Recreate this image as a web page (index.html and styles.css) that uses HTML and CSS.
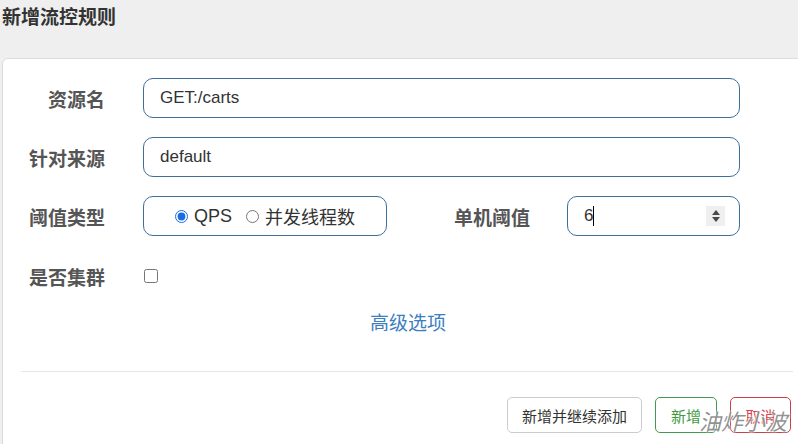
FILE: index.html
```html
<!DOCTYPE html>
<html lang="zh-CN">

<head>
    <meta charset="UTF-8">
    <meta name="viewport" content="width=device-width, initial-scale=1.0">
    <title>新增流控规则</title>
    <link rel="stylesheet" href="styles.css">
</head>

<body>
    <h3 class="title">新增流控规则</h3>
    <div class="card">
        <!-- 表单 -->
        <div class="form">
            <div class="row">
                <label class="label">资源名</label>
                <input class="field" type="text" value="GET:/carts" />
            </div>
            <div class="row">
                <label class="label">针对来源</label>
                <input class="field" type="text" value="default" />
            </div>
            <div class="row">
                <label class="label">阈值类型</label>
                <div class="radios">
                    <label class="radio"><input type="radio" name="grade" checked /> QPS</label>
                    <label class="radio"><input type="radio" name="grade" /> 并发线程数</label>
                </div>
                <label class="label label-2">单机阈值</label>
                <div class="num">
                    <span>6</span><span class="caret"></span>
                    <span class="spin">
                        <i class="up"></i>
                        <i class="down"></i>
                    </span>
                </div>
            </div>
            <div class="row row-check">
                <label class="label">是否集群</label>
                <input class="check" type="checkbox" />
            </div>
            <a class="more" href="#">高级选项</a>
        </div>
        <div class="line"></div>
        <div class="footer">
            <button class="btn">新增并继续添加</button>
            <button class="btn btn-ok">新增</button>
            <button class="btn btn-cancel">取消</button>
        </div>
    </div>
    <div class="mark">油炸小波</div>
</body>

</html>
```

FILE: styles.css
```css
html,
body {
    margin: 0;
    padding: 0;
    overflow: hidden;
}

body {
    position: relative;
    height: 444px;
    background-color: #efefef;
    font-family: "Liberation Sans", "Noto Sans CJK SC", sans-serif;
    color: #333;
}

.title {
    margin: 0;
    padding: 6px 0 0 2px;
    height: 58px;
    box-sizing: border-box;
    font-size: 19px;
    line-height: 24px;
    color: #333;
}

.card {
    width: 812px;
    height: 400px;
    margin-left: 2px;
    box-sizing: border-box;
    border: 1px solid #dcdcdc;
    border-radius: 6px;
    background-color: #fff;
    padding-top: 19px;
}

.row {
    display: flex;
    align-items: center;
    height: 40px;
    margin-bottom: 19px;
}

.label {
    width: 102px;
    margin-right: 38px;
    text-align: right;
    font-size: 19px;
    font-weight: bold;
    color: #555;
}

.field {
    width: 597px;
    height: 40px;
    box-sizing: border-box;
    padding: 0 16px;
    border: 1px solid #3f6f9b;
    border-radius: 10px;
    outline: none;
    font-family: inherit;
    font-size: 17px;
    color: #333;
}

.radios {
    display: flex;
    align-items: center;
    justify-content: center;
    width: 244px;
    height: 40px;
    box-sizing: border-box;
    border: 1px solid #3f6f9b;
    border-radius: 10px;
    font-size: 18px;
    color: #333;
}

.radio {
    display: flex;
    align-items: center;
    gap: 6px;
}

.radio + .radio {
    margin-left: 14px;
}

.radio input {
    margin: 0;
    width: 13px;
    height: 13px;
    accent-color: #1a6fe0;
}

.label-2 {
    width: 143px;
    margin-right: 37px;
}

.num {
    display: flex;
    align-items: center;
    width: 173px;
    height: 40px;
    box-sizing: border-box;
    padding: 0 14px 0 16px;
    border: 1px solid #3f6f9b;
    border-radius: 10px;
    font-size: 17px;
    color: #333;
}

.caret {
    width: 1px;
    height: 20px;
    background-color: #000;
}

.spin {
    margin-left: auto;
    width: 19px;
    height: 20px;
    background-color: #efefef;
    display: flex;
    flex-direction: column;
    align-items: center;
    justify-content: center;
    gap: 2px;
}

.spin i {
    width: 0;
    height: 0;
    border-left: 4px solid transparent;
    border-right: 4px solid transparent;
}

.spin .up {
    border-bottom: 5px solid #4a4a4a;
}

.spin .down {
    border-top: 5px solid #4a4a4a;
}

.row-check {
    height: 24px;
    margin-top: 28px;
    margin-bottom: 0;
}

.check {
    margin: 0 0 0 1px;
    width: 14px;
    height: 14px;
}

.more {
    display: block;
    margin-top: 24px;
    margin-left: 60px;
    width: 690px;
    text-align: center;
    font-size: 19px;
    line-height: 24px;
    color: #3d7ebf;
    text-decoration: none;
}

.line {
    height: 1px;
    margin: 35px 20px 0 18px;
    background-color: #e6e6e6;
}

.footer {
    display: flex;
    padding: 25px 0 0 504px;
}

.btn {
    height: 36px;
    padding: 0 14px;
    border: 1px solid #ccc;
    border-radius: 5px;
    background-color: #fff;
    font-family: inherit;
    font-size: 15px;
    color: #333;
    margin-right: 13px;
}

.btn-ok {
    width: 62px;
    padding: 0;
    border-color: #3f9a52;
    color: #3f9a3f;
}

.btn-cancel {
    width: 61px;
    padding: 0;
    border-color: #c9404a;
    color: #d9434f;
    margin-right: 0;
}

.mark {
    position: absolute;
    left: 699px;
    top: 408px;
    font-size: 22px;
    line-height: 30px;
    font-style: italic;
    color: rgba(110, 110, 110, 0.75);
    text-shadow: 0 0 2px #fff, 0 0 2px #fff;
}
```
